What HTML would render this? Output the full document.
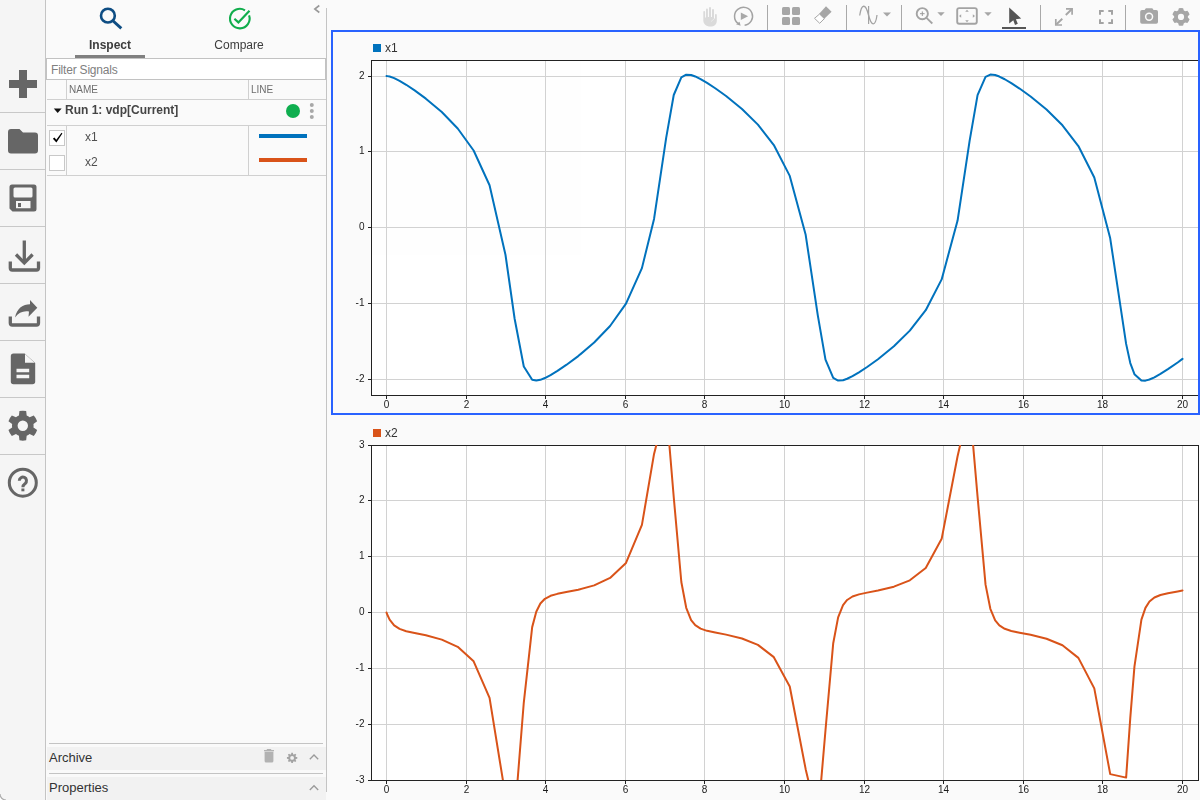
<!DOCTYPE html>
<html>
<head>
<meta charset="utf-8">
<title>Simulation Data Inspector</title>
<style>
*{box-sizing:border-box;margin:0;padding:0}
html,body{width:1200px;height:800px;overflow:hidden;background:#fafafa;font-family:"Liberation Sans",sans-serif;font-size:12px;color:#333}
#app{position:relative;width:1200px;height:800px;overflow:hidden;background:#fafafa}
.abs{position:absolute}
/* left icon bar */
#lbar{position:absolute;left:0;top:0;width:46px;height:800px;background:#f5f5f5;border-right:1px solid #c4c4c4}
#lbar .sep{position:absolute;left:0;width:45px;height:1px;background:#c8c8c8}
#lbar svg{position:absolute;left:0;top:0}
/* sidebar */
#side{position:absolute;left:46px;top:0;width:280px;height:800px;background:#fafafa}
#sideborder{position:absolute;left:326px;top:8px;width:1px;height:784px;background:#c4c4c4}
.tab{position:absolute;top:38px;will-change:transform;opacity:0.999;font-size:12px;color:#3c3c3c;text-align:center;white-space:nowrap}
#filter{position:absolute;left:46px;top:58px;width:280px;height:22px;background:#fff;border:1px solid #c2c2c2;font-size:12px;color:#808080;line-height:22px;padding-left:4px;letter-spacing:-0.2px}
.hdr{position:absolute;top:80px;height:19px;font-size:10px;color:#6e6e6e;line-height:20px;will-change:transform;opacity:0.999}
.hline{position:absolute;height:1px;background:#d0d0d0}
.vline{position:absolute;width:1px;background:#d0d0d0}
.cb{position:absolute;left:49px;width:16px;height:16px;background:#fff;border:1px solid #c8c8c8}
.sig{position:absolute;left:85px;font-size:12px;color:#505050;line-height:14px}
.sect{position:absolute;left:47px;width:279px;background:#f2f2f2;font-size:13px;color:#333}
svg text.tk{font-family:"Liberation Sans",sans-serif;font-size:10px;fill:#1a1a1a}
svg text.lg{font-family:"Liberation Sans",sans-serif;font-size:12px;fill:#333}
</style>
</head>
<body>
<div id="app">

<!-- ============ LEFT ICON BAR ============ -->
<div id="lbar">
  <div class="sep" style="top:112px"></div>
  <div class="sep" style="top:169px"></div>
  <div class="sep" style="top:226px"></div>
  <div class="sep" style="top:283px"></div>
  <div class="sep" style="top:340px"></div>
  <div class="sep" style="top:397px"></div>
  <div class="sep" style="top:454px"></div>
  <svg width="46" height="520" viewBox="0 0 46 520">
    <g fill="#666">
      <!-- plus -->
      <rect x="9" y="80" width="28" height="8"/>
      <rect x="19" y="70" width="8" height="28"/>
      <!-- folder -->
      <path d="M8 132 a3 3 0 0 1 3 -3 h8.5 l3.5 3.5 h12 a3 3 0 0 1 3 3 v15 a3 3 0 0 1 -3 3 h-24 a3 3 0 0 1 -3 -3z"/>
      <!-- save -->
      <path fill-rule="evenodd" d="M12 184.500 h22 a2.500 2.500 0 0 1 2.500 2.500 v22 a2.500 2.500 0 0 1 -2.500 2.500 h-21.500 l-3 -3 v-21.500 a2.500 2.500 0 0 1 2.500 -2.500z M15 187.500 a1.500 1.500 0 0 0 -1.500 1.500 v7 a1.500 1.500 0 0 0 1.500 1.500 h16 a1.500 1.500 0 0 0 1.500 -1.500 v-7 a1.500 1.500 0 0 0 -1.500 -1.500z M16 201 v7.300 h14.500 v-7.300z M18 203 h3 v4 h-3z"/>
    </g>
    <!-- download -->
    <g fill="none" stroke="#666" stroke-width="3.300">
      <path d="M24.300 240.500 V262"/>
      <path d="M16 254.500 L24.300 262.800 L32.600 254.500" stroke-linejoin="miter"/>
      <path d="M10.300 261.500 V268 a2 2 0 0 0 2 2 H36.500 a2 2 0 0 0 2 -2 V261.500"/>
      <!-- share tray -->
      <path d="M10.300 316.500 V323 a2 2 0 0 0 2 2 H36.500 a2 2 0 0 0 2 -2 V316.500"/>
    </g>
    <!-- share arrow -->
    <path fill="#666" d="M15 317.500 C17 308 23 304.500 30 304.300 L30 300 L37.300 307.800 L28.500 316.700 L29 311.500 C23.500 310.500 18.500 312.500 15 317.500z"/>
    <!-- doc -->
    <path fill="#666" fill-rule="evenodd" d="M13.500 353.500 h11.200 l10.500 9.500 v18.500 a2.700 2.700 0 0 1 -2.700 2.700 h-19 a2.700 2.700 0 0 1 -2.700 -2.700 v-25.300 a2.700 2.700 0 0 1 2.700 -2.700z M16.500 368.800 v3.400 h12.700 v-3.400z M16.500 374.800 v3.400 h12.700 v-3.400z"/>
    <path fill="#f5f5f5" d="M25 354 L34.700 362.800 H25z"/>
    <!-- gear -->
    <g id="biggear" transform="translate(22.800 425.700)">
      <path fill="#666" fill-rule="evenodd" d="M3.87 -10.08 L3.37 -14.62 A15.00 15.00 0 0 0 -3.37 -14.62 L-3.87 -10.08 A10.80 10.80 0 0 0 -6.80 -8.39 L-10.97 -10.23 A15.00 15.00 0 0 0 -14.34 -4.39 L-10.67 -1.69 A10.80 10.80 0 0 0 -10.67 1.69 L-14.34 4.39 A15.00 15.00 0 0 0 -10.97 10.23 L-6.80 8.39 A10.80 10.80 0 0 0 -3.87 10.08 L-3.37 14.62 A15.00 15.00 0 0 0 3.37 14.62 L3.87 10.08 A10.80 10.80 0 0 0 6.80 8.39 L10.97 10.23 A15.00 15.00 0 0 0 14.34 4.39 L10.67 1.69 A10.80 10.80 0 0 0 10.67 -1.69 L14.34 -4.39 A15.00 15.00 0 0 0 10.97 -10.23 L6.80 -8.39 A10.80 10.80 0 0 0 3.87 -10.08 Z M5.20 0 A5.20 5.20 0 1 0 -5.20 0 A5.20 5.20 0 1 0 5.20 0Z"/>
    </g>
    <!-- help -->
    <circle cx="22.800" cy="482.700" r="13.500" fill="none" stroke="#666" stroke-width="3"/>
    <path d="M19.300 480.700 a3.600 3.600 0 1 1 5.900 2.800 c-1.600 1.200 -2.300 1.900 -2.300 3.700" fill="none" stroke="#666" stroke-width="3"/><rect x="21.400" y="488.500" width="3" height="2.800" fill="#666"/>
  </svg>
</div>

<svg class="abs" style="left:0;top:792px" width="8" height="8" viewBox="0 792 8 8"><path d="M0 794 A6 6 0 0 0 6 800 H0z" fill="#fff"/><path d="M0 794 A6 6 0 0 0 6 800" fill="none" stroke="#adadad" stroke-width="1.200"/></svg>
<!-- ============ SIDEBAR ============ -->
<div id="side"></div>
<div id="sideborder"></div>

<!-- tabs -->
<svg class="abs" style="left:46px;top:0" width="280" height="58" viewBox="46 0 280 58">
  <circle cx="107.900" cy="15.650" r="6.900" fill="none" stroke="#0e4d83" stroke-width="2.600"/>
  <path d="M112.600 20.500 L121.300 28.300" stroke="#0e4d83" stroke-width="3" fill="none"/>
  <path d="M244.99 10.29 A9.8 9.8 0 1 0 249.07 15.41" fill="none" stroke="#10ad4c" stroke-width="2.100"/>
  <path d="M234.400 18.800 L238.400 22.400 L249.500 10.800" fill="none" stroke="#10ad4c" stroke-width="2.200"/>
  <path d="M319.300 5.500 L314.800 9 L319.300 12.500" fill="none" stroke="#999" stroke-width="1.600"/>
</svg>
<div class="tab" style="left:75px;width:70px;font-weight:bold">Inspect</div>
<div class="tab" style="left:204px;width:70px">Compare</div>
<div class="abs" style="left:75px;top:55px;width:70px;height:3px;background:#808080"></div>

<div id="filter">Filter Signals</div>

<!-- header row -->
<div class="hdr" style="left:69px">NAME</div>
<div class="hdr" style="left:251px">LINE</div>
<div class="vline" style="left:66px;top:80px;height:19px"></div>
<div class="vline" style="left:248px;top:80px;height:19px"></div>
<div class="hline" style="left:47px;top:99px;width:279px"></div>

<!-- run row -->
<svg class="abs" style="left:46px;top:100px" width="280" height="25" viewBox="46 100 280 25">
  <path d="M53.800 108.600 h7.800 l-3.900 4.400z" fill="#111"/>
  <circle cx="293" cy="111" r="7" fill="#0fae4f"/>
  <circle cx="311.800" cy="105" r="2" fill="#a8a8a8"/>
  <circle cx="311.800" cy="111" r="2" fill="#a8a8a8"/>
  <circle cx="311.800" cy="117" r="2" fill="#a8a8a8"/>
</svg>
<div class="abs" style="left:65px;top:103px;font-size:12px;font-weight:bold;color:#444;line-height:14px;white-space:nowrap">Run 1: vdp[Current]</div>
<div class="hline" style="left:47px;top:125px;width:279px"></div>

<!-- signal rows -->
<div class="vline" style="left:66px;top:126px;height:49px"></div>
<div class="vline" style="left:248px;top:126px;height:49px"></div>
<div class="cb" style="top:130px"></div>
<svg class="abs" style="left:49px;top:130px" width="16" height="16" viewBox="0 0 16 16"><path d="M3.900 8.700 L5.400 7.500 L7.300 9.700 L12.500 2.800 L13.400 3.500 L7.400 12.400z" fill="#000"/></svg>
<div class="cb" style="top:155px"></div>
<div class="sig" style="top:130px">x1</div>
<div class="sig" style="top:155px">x2</div>
<div class="abs" style="left:259px;top:134px;width:48px;height:4px;background:#0072BD"></div>
<div class="abs" style="left:259px;top:158px;width:48px;height:4px;background:#D95319"></div>
<div class="hline" style="left:47px;top:175px;width:279px"></div>

<!-- archive / properties -->
<div class="hline" style="left:49px;top:743px;width:274px;background:#c4c4c4"></div>
<div class="sect" style="top:747px;height:23px;line-height:22px;padding-left:2px">Archive</div>
<div class="hline" style="left:49px;top:773px;width:274px;background:#c4c4c4"></div>
<div class="sect" style="top:777px;height:23px;line-height:22px;padding-left:2px">Properties</div>


<svg class="abs" style="left:256px;top:745px" width="70" height="55" viewBox="256 745 70 55">
  <path fill="#b2b2b2" d="M264 750 h10 v1.200 h-10z M266.800 749 h4.400 v1 h-4.400z M264.600 751.800 h8.800 v9.200 a1.500 1.500 0 0 1 -1.500 1.500 h-5.800 a1.500 1.500 0 0 1 -1.500 -1.500z"/>
  <g transform="translate(292.100 757.900)"><path fill="#a3a3a3" fill-rule="evenodd" d="M1.01 -3.77 L0.81 -5.14 A5.20 5.20 0 0 0 -0.81 -5.14 L-1.01 -3.77 A3.90 3.90 0 0 0 -1.95 -3.38 L-3.06 -4.21 A5.20 5.20 0 0 0 -4.21 -3.06 L-3.38 -1.95 A3.90 3.90 0 0 0 -3.77 -1.01 L-5.14 -0.81 A5.20 5.20 0 0 0 -5.14 0.81 L-3.77 1.01 A3.90 3.90 0 0 0 -3.38 1.95 L-4.21 3.06 A5.20 5.20 0 0 0 -3.06 4.21 L-1.95 3.38 A3.90 3.90 0 0 0 -1.01 3.77 L-0.81 5.14 A5.20 5.20 0 0 0 0.81 5.14 L1.01 3.77 A3.90 3.90 0 0 0 1.95 3.38 L3.06 4.21 A5.20 5.20 0 0 0 4.21 3.06 L3.38 1.95 A3.90 3.90 0 0 0 3.77 1.01 L5.14 0.81 A5.20 5.20 0 0 0 5.14 -0.81 L3.77 -1.01 A3.90 3.90 0 0 0 3.38 -1.95 L4.21 -3.06 A5.20 5.20 0 0 0 3.06 -4.21 L1.95 -3.38 A3.90 3.90 0 0 0 1.01 -3.77 Z M1.90 0 A1.90 1.90 0 1 0 -1.90 0 A1.90 1.90 0 1 0 1.90 0Z"/></g>
  <path d="M309.800 759.300 L314 755 L318.200 759.300" fill="none" stroke="#9a9a9a" stroke-width="1.300"/>
  <path d="M309.800 790 L314 785.700 L318.200 790" fill="none" stroke="#9a9a9a" stroke-width="1.300"/>
</svg>

<!-- ============ MAIN ============ -->
<svg class="abs" style="left:326px;top:0;will-change:transform;opacity:0.999" width="874" height="800" viewBox="326 0 874 800">

  <g id="toolbar">
    <!-- separators -->
    <g fill="#a9a9a9">
      <rect x="767" y="5" width="1" height="25"/>
      <rect x="846" y="5" width="1" height="25"/>
      <rect x="901" y="5" width="1" height="25"/>
      <rect x="1040" y="5" width="1" height="25"/>
      <rect x="1125" y="5" width="1" height="25"/>
    </g>
    <!-- hand (disabled) -->
    <path fill="#dadada" d="M703.3 12 a0.900 0.900 0 0 1 1.800 0 V17.500 h0.900 V9.500 a0.950 0.950 0 0 1 1.900 0 V17 h1.100 V8 a1 1 0 0 1 2 0 V17 h1 V10 a1 1 0 0 1 2 0 V18.500 h1 V15 a0.900 0.900 0 0 1 1.800 0 V20.800 c0 3.600 -2.500 5.800 -6.500 5.800 c-4.300 0 -7 -2.500 -7 -6.500z"/>
    <path d="M711 21.600 L714.600 18.500" stroke="#f4f4f4" stroke-width="0.600" fill="none"/>
    <!-- replay -->
    <path d="M744.600 25.250 A9 9 0 1 0 738 23.400" fill="none" stroke="#a3a3a3" stroke-width="1.500"/>
    <path d="M736 24.300 L739.500 21.800 L740.700 25.800z" fill="#a3a3a3"/>
    <path d="M740.800 12.500 V20.100 L748.100 16.300z" fill="#a8a8a8"/>
    <!-- grid -->
    <g fill="#a6a6a6">
      <rect x="782" y="7" width="8" height="8" rx="1.500"/>
      <rect x="792" y="7" width="8" height="8" rx="1.500"/>
      <rect x="782" y="17" width="8" height="8" rx="1.500"/>
      <rect x="792" y="17" width="8" height="8" rx="1.500"/>
    </g>
    <!-- eraser -->
    <path d="M819.600 14 L824.400 18.600 L819.700 23.300 L814.500 18.300z" fill="#fff" stroke="#a6a6a6" stroke-width="1"/>
    <path d="M826 6.200 L831.600 11.800 L824.300 18.700 L819.200 13.700z" fill="#a6a6a6"/>
    <!-- sine -->
    <path d="M859.700 15.500 C861.500 3.500 865.500 3 868.500 15 C871.500 27 875.500 26.500 877 15" fill="none" stroke="#a3a3a3" stroke-width="1.300"/>
    <rect x="868" y="6" width="1.200" height="18" fill="#a3a3a3"/>
    <path d="M883 12.500 h8 l-4 4z" fill="#a6a6a6"/>
    <!-- zoom -->
    <circle cx="922.300" cy="13.700" r="5.600" fill="none" stroke="#a3a3a3" stroke-width="1.900"/>
    <path d="M920 13.700 h4.600 M922.300 11.400 v4.600" stroke="#999" stroke-width="1" fill="none"/>
    <path d="M926.500 17.800 L932.300 23.500" stroke="#a3a3a3" stroke-width="1.800" fill="none"/>
    <path d="M937.300 12.300 h7.400 l-3.700 3.800z" fill="#a6a6a6"/>
    <!-- fit to view -->
    <rect x="957.200" y="8.100" width="19.600" height="15.700" rx="2" fill="none" stroke="#a3a3a3" stroke-width="1.900"/>
    <g fill="#a6a6a6">
      <path d="M965.200 11.800 h3.600 l-1.800 -2.100z"/>
      <path d="M965.200 20.200 h3.600 l-1.800 2.100z"/>
      <path d="M961.200 14.200 v3.600 l-2.200 -1.800z"/>
      <path d="M972.800 14.200 v3.600 l2.200 -1.800z"/>
    </g>
    <path d="M984.300 12.300 h7.400 l-3.700 3.800z" fill="#a6a6a6"/>
    <!-- cursor -->
    <path d="M1009.200 7.500 V23.500 L1013.300 20.300 L1015 24.900 L1017.800 23.800 L1015.900 19.300 L1021.200 18.600z" fill="#555"/>
    <rect x="1002" y="27" width="24" height="2" fill="#555"/>
    <!-- expand -->
    <g fill="none" stroke="#a6a6a6" stroke-width="1.900">
      <path d="M1056.500 24.200 L1062.300 18.800 M1065.800 15 L1071.700 9.300"/>
      <path d="M1066 8.900 H1072.100 V14.800" stroke-width="1.700"/>
      <path d="M1055.800 19 V25 H1062" stroke-width="1.700"/>
    </g>
    <!-- fullscreen -->
    <g fill="none" stroke="#a3a3a3" stroke-width="2">
      <path d="M1100 14.700 V11 H1103.700"/>
      <path d="M1108.300 11 H1112 V14.700"/>
      <path d="M1100 19.200 V22.900 H1103.700"/>
      <path d="M1108.300 22.900 H1112 V19.200"/>
    </g>
    <!-- camera -->
    <path fill="#a6a6a6" fill-rule="evenodd" d="M1142 10 h2.600 l1.300 -1.700 h6.400 l1.300 1.700 h2.600 a1.800 1.800 0 0 1 1.800 1.800 v10.100 a1.800 1.800 0 0 1 -1.800 1.800 h-14.200 a1.800 1.800 0 0 1 -1.800 -1.800 v-10.100 a1.800 1.800 0 0 1 1.800 -1.800z M1153.300 16.800 a4.200 4.200 0 1 0 -8.400 0 a4.200 4.200 0 1 0 8.400 0z"/>
    <circle cx="1149.100" cy="16.800" r="2.700" fill="#a6a6a6"/>
    <!-- gear -->
    <g transform="translate(1181 16.900)"><path fill="#a6a6a6" fill-rule="evenodd" d="M2.81 -6.30 L2.15 -8.64 A8.90 8.90 0 0 0 -2.15 -8.64 L-2.81 -6.30 A6.90 6.90 0 0 0 -4.06 -5.58 L-6.40 -6.18 A8.90 8.90 0 0 0 -8.56 -2.45 L-6.86 -0.72 A6.90 6.90 0 0 0 -6.86 0.72 L-8.56 2.45 A8.90 8.90 0 0 0 -6.40 6.18 L-4.06 5.58 A6.90 6.90 0 0 0 -2.81 6.30 L-2.15 8.64 A8.90 8.90 0 0 0 2.15 8.64 L2.81 6.30 A6.90 6.90 0 0 0 4.06 5.58 L6.40 6.18 A8.90 8.90 0 0 0 8.56 2.45 L6.86 0.72 A6.90 6.90 0 0 0 6.86 -0.72 L8.56 -2.45 A8.90 8.90 0 0 0 6.40 -6.18 L4.06 -5.58 A6.90 6.90 0 0 0 2.81 -6.30 Z M3.10 0 A3.10 3.10 0 1 0 -3.10 0 A3.10 3.10 0 1 0 3.10 0Z"/></g>
  </g>

  <!-- plot 1 -->
  <rect x="373" y="44" width="8" height="8" fill="#0072BD"/>
  <text x="385" y="52" class="lg">x1</text>
<rect x="372" y="61" width="826" height="334" fill="#fff"/>
<rect x="386" y="61" width="1" height="334" fill="#d2d2d2"/>
<rect x="466" y="61" width="1" height="334" fill="#d2d2d2"/>
<rect x="545" y="61" width="1" height="334" fill="#d2d2d2"/>
<rect x="625" y="61" width="1" height="334" fill="#d2d2d2"/>
<rect x="704" y="61" width="1" height="334" fill="#d2d2d2"/>
<rect x="784" y="61" width="1" height="334" fill="#d2d2d2"/>
<rect x="864" y="61" width="1" height="334" fill="#d2d2d2"/>
<rect x="943" y="61" width="1" height="334" fill="#d2d2d2"/>
<rect x="1023" y="61" width="1" height="334" fill="#d2d2d2"/>
<rect x="1102" y="61" width="1" height="334" fill="#d2d2d2"/>
<rect x="1182" y="61" width="1" height="334" fill="#d2d2d2"/>
<rect x="372" y="76" width="826" height="1" fill="#d2d2d2"/>
<rect x="372" y="151" width="826" height="1" fill="#d2d2d2"/>
<rect x="372" y="227" width="826" height="1" fill="#d2d2d2"/>
<rect x="372" y="303" width="826" height="1" fill="#d2d2d2"/>
<rect x="372" y="379" width="826" height="1" fill="#d2d2d2"/>
<rect x="371" y="60" width="1" height="336" fill="#222"/>
<rect x="371" y="60" width="828" height="1" fill="#222"/>
<rect x="371" y="395" width="828" height="1" fill="#222"/>
<rect x="1198" y="60" width="1" height="336" fill="#222"/>
<rect x="386" y="396" width="1" height="3" fill="#222"/>
<rect x="466" y="396" width="1" height="3" fill="#222"/>
<rect x="545" y="396" width="1" height="3" fill="#222"/>
<rect x="625" y="396" width="1" height="3" fill="#222"/>
<rect x="704" y="396" width="1" height="3" fill="#222"/>
<rect x="784" y="396" width="1" height="3" fill="#222"/>
<rect x="864" y="396" width="1" height="3" fill="#222"/>
<rect x="943" y="396" width="1" height="3" fill="#222"/>
<rect x="1023" y="396" width="1" height="3" fill="#222"/>
<rect x="1102" y="396" width="1" height="3" fill="#222"/>
<rect x="1182" y="396" width="1" height="3" fill="#222"/>
<text x="386.5" y="408" text-anchor="middle" class="tk">0</text>
<text x="466.5" y="408" text-anchor="middle" class="tk">2</text>
<text x="545.5" y="408" text-anchor="middle" class="tk">4</text>
<text x="625.5" y="408" text-anchor="middle" class="tk">6</text>
<text x="704.5" y="408" text-anchor="middle" class="tk">8</text>
<text x="784.5" y="408" text-anchor="middle" class="tk">10</text>
<text x="864.5" y="408" text-anchor="middle" class="tk">12</text>
<text x="943.5" y="408" text-anchor="middle" class="tk">14</text>
<text x="1023.5" y="408" text-anchor="middle" class="tk">16</text>
<text x="1102.5" y="408" text-anchor="middle" class="tk">18</text>
<text x="1182.5" y="408" text-anchor="middle" class="tk">20</text>
<rect x="368" y="76" width="3" height="1" fill="#222"/>
<text x="364.500" y="79.4" text-anchor="end" class="tk">2</text>
<rect x="368" y="151" width="3" height="1" fill="#222"/>
<text x="364.500" y="154.4" text-anchor="end" class="tk">1</text>
<rect x="368" y="227" width="3" height="1" fill="#222"/>
<text x="364.500" y="230.4" text-anchor="end" class="tk">0</text>
<rect x="368" y="303" width="3" height="1" fill="#222"/>
<text x="364.500" y="306.4" text-anchor="end" class="tk">-1</text>
<rect x="368" y="379" width="3" height="1" fill="#222"/>
<text x="364.500" y="382.4" text-anchor="end" class="tk">-2</text>
<clipPath id="c1"><rect x="372" y="60" width="826" height="335"/></clipPath>
<polyline clip-path="url(#c1)" points="386.50,76.10 386.50,76.10 386.52,76.10 386.62,76.10 387.12,76.12 389.62,76.50 394.15,78.07 399.57,80.80 406.23,84.78 414.63,90.38 425.87,98.64 441.79,112.06 457.71,128.50 473.63,150.51 489.55,185.21 505.47,254.75 514.63,318.74 523.79,366.49 532.18,379.73 536.27,380.57 540.37,379.82 544.91,378.01 550.54,375.04 557.45,370.83 566.26,364.93 578.24,356.08 594.16,342.56 610.08,325.96 626.00,303.63 641.92,268.12 654.05,218.90 666.17,137.95 673.75,94.99 681.33,77.36 686.23,74.66 691.13,75.01 695.23,76.45 700.58,79.10 707.06,82.91 715.23,88.25 726.07,96.00 741.99,108.95 757.91,124.59 773.83,145.04 789.75,175.90 805.67,234.81 817.76,315.07 825.49,359.61 833.23,377.87 838.13,380.57 843.03,380.22 847.14,378.77 852.49,376.12 858.97,372.31 867.13,366.98 877.98,359.22 893.90,346.28 909.82,330.65 925.74,310.21 941.66,279.39 957.58,220.57 969.57,141.06 977.56,95.11 985.54,76.96 990.35,74.58 995.17,75.02 999.34,76.53 1004.74,79.24 1011.30,83.12 1019.57,88.55 1030.61,96.48 1046.53,109.51 1062.45,125.30 1078.37,146.02 1094.29,177.53 1110.21,238.28 1126.13,343.90 1130.28,363.08 1134.44,374.17 1141.41,380.57 1145.44,380.65 1149.46,379.52 1154.41,377.29 1160.44,373.90 1167.93,369.18 1177.66,362.46 1182.50,358.89" fill="none" stroke="#0072BD" stroke-width="2" stroke-linejoin="round" stroke-linecap="round"/>
  <!-- plot 2 -->
  <rect x="373" y="429" width="8" height="8" fill="#D95319"/>
  <text x="385" y="437" class="lg">x2</text>
<rect x="372" y="446" width="826" height="334" fill="#fff"/>
<rect x="386" y="446" width="1" height="334" fill="#d2d2d2"/>
<rect x="466" y="446" width="1" height="334" fill="#d2d2d2"/>
<rect x="545" y="446" width="1" height="334" fill="#d2d2d2"/>
<rect x="625" y="446" width="1" height="334" fill="#d2d2d2"/>
<rect x="704" y="446" width="1" height="334" fill="#d2d2d2"/>
<rect x="784" y="446" width="1" height="334" fill="#d2d2d2"/>
<rect x="864" y="446" width="1" height="334" fill="#d2d2d2"/>
<rect x="943" y="446" width="1" height="334" fill="#d2d2d2"/>
<rect x="1023" y="446" width="1" height="334" fill="#d2d2d2"/>
<rect x="1102" y="446" width="1" height="334" fill="#d2d2d2"/>
<rect x="1182" y="446" width="1" height="334" fill="#d2d2d2"/>
<rect x="372" y="500" width="826" height="1" fill="#d2d2d2"/>
<rect x="372" y="556" width="826" height="1" fill="#d2d2d2"/>
<rect x="372" y="612" width="826" height="1" fill="#d2d2d2"/>
<rect x="372" y="668" width="826" height="1" fill="#d2d2d2"/>
<rect x="372" y="724" width="826" height="1" fill="#d2d2d2"/>
<rect x="371" y="445" width="1" height="336" fill="#222"/>
<rect x="371" y="445" width="828" height="1" fill="#222"/>
<rect x="371" y="780" width="828" height="1" fill="#222"/>
<rect x="1198" y="445" width="1" height="336" fill="#222"/>
<rect x="386" y="781" width="1" height="3" fill="#222"/>
<rect x="466" y="781" width="1" height="3" fill="#222"/>
<rect x="545" y="781" width="1" height="3" fill="#222"/>
<rect x="625" y="781" width="1" height="3" fill="#222"/>
<rect x="704" y="781" width="1" height="3" fill="#222"/>
<rect x="784" y="781" width="1" height="3" fill="#222"/>
<rect x="864" y="781" width="1" height="3" fill="#222"/>
<rect x="943" y="781" width="1" height="3" fill="#222"/>
<rect x="1023" y="781" width="1" height="3" fill="#222"/>
<rect x="1102" y="781" width="1" height="3" fill="#222"/>
<rect x="1182" y="781" width="1" height="3" fill="#222"/>
<text x="386.5" y="793" text-anchor="middle" class="tk">0</text>
<text x="466.5" y="793" text-anchor="middle" class="tk">2</text>
<text x="545.5" y="793" text-anchor="middle" class="tk">4</text>
<text x="625.5" y="793" text-anchor="middle" class="tk">6</text>
<text x="704.5" y="793" text-anchor="middle" class="tk">8</text>
<text x="784.5" y="793" text-anchor="middle" class="tk">10</text>
<text x="864.5" y="793" text-anchor="middle" class="tk">12</text>
<text x="943.5" y="793" text-anchor="middle" class="tk">14</text>
<text x="1023.5" y="793" text-anchor="middle" class="tk">16</text>
<text x="1102.5" y="793" text-anchor="middle" class="tk">18</text>
<text x="1182.5" y="793" text-anchor="middle" class="tk">20</text>
<rect x="368" y="445" width="3" height="1" fill="#222"/>
<text x="364.500" y="448.4" text-anchor="end" class="tk">3</text>
<rect x="368" y="500" width="3" height="1" fill="#222"/>
<text x="364.500" y="503.4" text-anchor="end" class="tk">2</text>
<rect x="368" y="556" width="3" height="1" fill="#222"/>
<text x="364.500" y="559.4" text-anchor="end" class="tk">1</text>
<rect x="368" y="612" width="3" height="1" fill="#222"/>
<text x="364.500" y="615.4" text-anchor="end" class="tk">0</text>
<rect x="368" y="668" width="3" height="1" fill="#222"/>
<text x="364.500" y="671.4" text-anchor="end" class="tk">-1</text>
<rect x="368" y="724" width="3" height="1" fill="#222"/>
<text x="364.500" y="727.4" text-anchor="end" class="tk">-2</text>
<rect x="368" y="780" width="3" height="1" fill="#222"/>
<text x="364.500" y="783.4" text-anchor="end" class="tk">-3</text>
<clipPath id="c2"><rect x="372" y="445" width="826" height="335"/></clipPath>
<polyline clip-path="url(#c2)" points="386.50,612.60 386.50,612.61 386.52,612.67 386.62,612.94 387.12,614.27 389.62,619.59 394.15,625.38 399.57,628.91 406.23,631.18 414.63,633.03 425.87,635.32 441.79,639.63 457.71,646.86 473.63,661.36 489.55,697.89 505.47,796.00 514.63,817.29 523.79,702.53 532.18,627.13 536.27,611.75 540.37,603.55 544.91,598.80 550.54,595.80 557.45,593.84 566.26,592.09 578.24,589.71 594.16,585.34 610.08,577.94 626.00,562.97 641.92,524.89 654.05,453.94 666.17,406.65 673.75,497.24 681.33,582.01 686.23,607.78 691.13,620.07 695.23,625.21 700.58,628.67 707.06,630.84 715.23,632.56 726.07,634.63 741.99,638.54 757.91,644.91 773.83,657.16 789.75,686.48 805.67,769.18 817.76,820.31 825.49,730.28 833.23,643.19 838.13,617.41 843.03,605.11 847.14,599.99 852.49,596.53 858.97,594.36 867.13,592.64 877.98,590.57 893.90,586.67 909.82,580.31 925.74,568.07 941.66,538.83 957.58,456.29 969.57,404.25 977.56,496.64 985.54,584.64 990.35,608.78 995.17,620.40 999.34,625.45 1004.74,628.81 1011.30,630.93 1019.57,632.65 1030.61,634.76 1046.53,638.74 1062.45,645.25 1078.37,657.89 1094.29,688.40 1110.21,774.13 1126.13,777.62 1130.28,717.90 1134.44,666.66 1141.41,619.68 1145.44,607.90 1149.46,601.58 1154.41,597.54 1160.44,595.04 1167.93,593.26 1177.66,591.43 1182.50,590.48" fill="none" stroke="#D95319" stroke-width="2" stroke-linejoin="round" stroke-linecap="round"/>
  <!-- selection -->
  <rect x="332" y="31" width="867" height="383" fill="none" stroke="#2962ff" stroke-width="2"/>
</svg>

</div>
</body>
</html>
